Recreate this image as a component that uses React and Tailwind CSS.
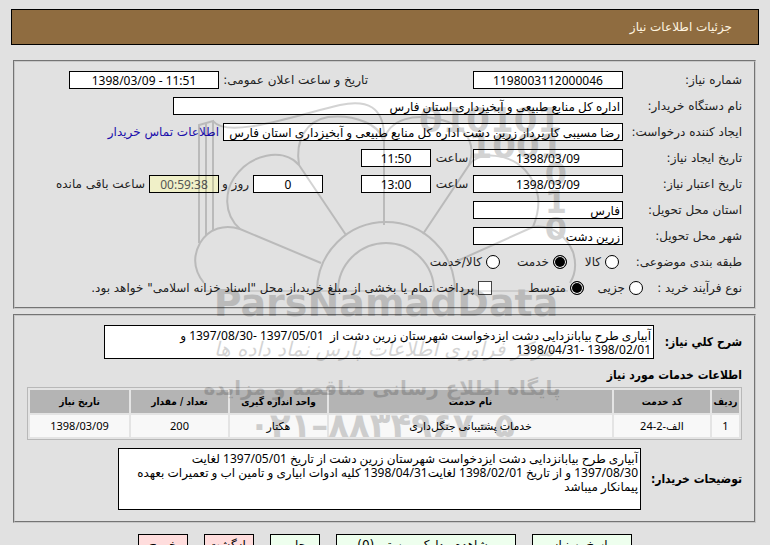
const inputBase =
  "h-[18px] min-w-0 border border-black bg-white px-0.5 font-['Noto_Sans','DejaVu_Sans',sans-serif] text-[12px] leading-4 text-black outline-none";

const Field = ({ id, value, className = "", label }) => (
  <input
    id={id}
    aria-label={label}
    readOnly
    defaultValue={value}
    className={`${inputBase} ${className}`}
  />
);

const Row = ({ label, htmlFor, children }) => (
  <div className="flex h-[18px] items-center">
    <label htmlFor={htmlFor} className="w-[119px] shrink-0 whitespace-nowrap">
      {label}
    </label>
    {children}
  </div>
);

const Radio = ({ name, label, checked, className = "" }) => (
  <label className={`flex items-center gap-1 whitespace-nowrap ${className}`}>
    <input
      type="radio"
      name={name}
      defaultChecked={checked}
      className="size-[14px] appearance-none rounded-full border border-black bg-white checked:bg-black checked:shadow-[inset_0_0_0_1px_white]"
    />
    {label}
  </label>
);

const services = [
  {
    row: "1",
    code: "الف-2-24",
    name: "خدمات پشتیبانی جنگل‌داری",
    unit: "هکتار",
    count: "200",
    date: "1398/03/09",
  },
];

const actions = [
  { label: "پاسخ به نیاز", className: "w-[100px] bg-[#eeffee]" },
  { label: "مشاهده مدارک پیوستی (0)", className: "w-[180px] bg-[#eeffee]" },
  { label: "چاپ", className: "w-[50px] bg-[#eeffee]" },
  { label: "بازگشت", className: "w-[50px] bg-[#ffdddd]" },
  { label: "خروج", className: "w-[50px] bg-[#ffdddd]" },
];

const Watermark = () => (
  <svg
    viewBox="185 80 400 370"
    aria-hidden="true"
    className="pointer-events-none absolute top-[80px] left-1/2 h-[370px] w-[400px] -translate-x-1/2 opacity-[0.17]"
  >
    <g fill="none" stroke="black" strokeWidth="2">
      <path d="M199 243V125L213 121V231M206 235V123" />
      <path d="M213 121C228 140 300 114 340 105C368 99 383 108 384 134V225" />
      <path d="M204 283C192 268 194 254 200 243C209 228 225 224 240 229L321 263" />
      <path d="M240 229C222 213 226 190 234 178C250 154 283 147 299 165L346 235" />
      <path d="M299 165C295 140 306 121 328 117C355 114 380 125 383 140" />
      <path d="M384 140C390 118 415 114 438 119C465 125 477 142 469 165L423 234" />
      <path d="M469 165C480 150 510 154 525 170C540 187 542 205 533 227L455 262" />
      <path d="M533 227C555 224 568 240 573 252C577 265 575 275 570 283" />
      <path d="M317 291A69 69 0 0 1 455 291M338 291A48 48 0 0 1 434 291" />
      <path d="M204 291H568" strokeWidth="1" />
    </g>
    <g
      fill="black"
      fontFamily="'DejaVu Sans', sans-serif"
      fontWeight="bold"
      textAnchor="middle"
    >
      <text x="490" y="132" fontSize="34">010101</text>
      <text x="516" y="158" fontSize="34">1001</text>
      <text x="556" y="185" fontSize="32">0</text>
      <text x="556" y="213" fontSize="32">1</text>
      <text x="556" y="240" fontSize="32">0</text>
      <text x="386" y="316" fontSize="38">ParsNamadData</text>
      <text x="384" y="356" fontSize="20" fontWeight="normal" fontStyle="italic">
        مرکز فرآوری اطلاعات پارس نماد داده ها
      </text>
      <text x="382" y="395" fontSize="20">پایگاه اطلاع رسانی مناقصه و مزایده</text>
      <text x="382" y="437" fontSize="34" direction="ltr">۰۲۱–۸۸۳۴۹۶۷۰۵</text>
    </g>
  </svg>
);

export default function App() {
  return (
    <div
      dir="rtl"
      className="relative min-h-screen overflow-hidden bg-[#e1e1e1] px-[12px] pt-[9px] pb-1 font-['DejaVu_Sans',sans-serif] text-[12px] leading-4 text-[#222]"
    >
      <header className="-mx-px flex h-9 items-center border border-black bg-[#8f6c40] px-[26px] text-[#fff5e0]">
        <h1>جزئیات اطلاعات نیاز</h1>
      </header>

      <main className="ms-0.5 me-px mt-[15px]">
        <section className="flex h-[249px] flex-col gap-2 border-2 border-[#c8c8c8] px-[12px] pt-[9px] [border-style:groove]">
          <Row label="شماره نیاز:" htmlFor="number">
            <Field id="number" value="1198003112000046" className="w-[150px] text-center" />
            <label htmlFor="announce" className="ms-[105px] w-[149px] whitespace-nowrap">
              تاریخ و ساعت اعلان عمومی:
            </label>
            <input
              id="announce"
              dir="ltr"
              readOnly
              defaultValue="1398/03/09 - 11:51"
              className={`${inputBase} w-[150px] text-center`}
            />
          </Row>
          <Row label="نام دستگاه خریدار:" htmlFor="org">
            <Field id="org" value="اداره کل منابع طبیعی و آبخیزداری استان فارس" className="w-[450px]" />
          </Row>
          <Row label="ایجاد کننده درخواست:" htmlFor="creator">
            <Field
              id="creator"
              value="رضا مسیبی کارپرداز زرین دشت اداره کل منابع طبیعی و آبخیزداری استان فارس"
              className="w-[400px]"
            />
            <a href="#contact" className="ms-1 whitespace-nowrap text-[#1a0dab]">
              اطلاعات تماس خریدار
            </a>
          </Row>
          <Row label="تاریخ ایجاد نیاز:" htmlFor="created">
            <Field id="created" value="1398/03/09" className="w-[150px] text-center" />
            <label htmlFor="createdTime" className="w-[42px] text-center">ساعت</label>
            <Field id="createdTime" value="11:50" className="w-[70px] text-center" />
          </Row>
          <Row label="تاریخ اعتبار نیاز:" htmlFor="valid">
            <Field id="valid" value="1398/03/09" className="w-[150px] text-center" />
            <label htmlFor="validTime" className="w-[42px] text-center">ساعت</label>
            <Field id="validTime" value="13:00" className="w-[70px] text-center" />
            <Field id="days" value="0" className="ms-[38px] w-[70px] text-center" />
            <label htmlFor="days" className="w-[34px] ps-1 whitespace-nowrap">روز و</label>
            <Field id="left" value="00:59:38" className="w-[70px] bg-[#f0f0c8]! text-center text-[#555]!" />
            <label htmlFor="left" className="ps-1 whitespace-nowrap">ساعت باقی مانده</label>
          </Row>
          <Row label="استان محل تحویل:" htmlFor="province">
            <Field id="province" value="فارس" className="w-[150px]" />
          </Row>
          <Row label="شهر محل تحویل:" htmlFor="city">
            <Field id="city" value="زرین دشت" className="w-[150px]" />
          </Row>
          <div role="radiogroup" aria-label="طبقه بندی موضوعی" className="flex h-[18px] items-center">
            <span className="w-[123px] shrink-0">طبقه بندی موضوعی:</span>
            <Radio name="kind" label="کالا" className="w-[52px]" />
            <Radio name="kind" label="خدمت" checked className="w-[67px]" />
            <Radio name="kind" label="کالا/خدمت" />
          </div>
          <div className="flex h-[18px] items-center">
            <span className="w-[99px] shrink-0">نوع فرآیند خرید :</span>
            <Radio name="size" label="جزیی" className="w-[59px]" />
            <Radio name="size" label="متوسط" checked className="w-[92px]" />
            <label className="flex items-center gap-1 whitespace-nowrap">
              <input type="checkbox" className="size-[14px] appearance-none border border-[#444] bg-white" />
              پرداخت تمام یا بخشی از مبلغ خرید،از محل "اسناد خزانه اسلامی" خواهد بود.
            </label>
          </div>
        </section>

        <section className="mt-[5px] border-2 border-[#c8c8c8] px-[12px] pt-[9px] pb-[11px] [border-style:groove]">
          <div className="flex items-center">
            <label
              htmlFor="summary"
              className="w-[88px] shrink-0 font-['DejaVu_Sans_Condensed','DejaVu_Sans',sans-serif] font-bold whitespace-nowrap text-black"
            >
              شرح کلي نیاز:
            </label>
            <textarea
              id="summary"
              readOnly
              rows={2}
              className="h-[34px] w-[550px] resize-none overflow-hidden border border-black bg-white px-0.5 pt-[3px] font-['Noto_Sans','DejaVu_Sans',sans-serif] leading-[14px] text-black"
              defaultValue={"آبیاری طرح بیابانزدایی دشت ایزدخواست شهرستان زرین دشت از  1397/05/01 -1397/08/30 و\n1398/02/01 -1398/04/31"}
            />
          </div>
          <h2 className="mt-2 mb-1 font-['DejaVu_Sans_Condensed','DejaVu_Sans',sans-serif] font-bold text-black">
            اطلاعات خدمات مورد نیاز
          </h2>
          <table className="w-full table-fixed border-separate border-spacing-[2px] border border-[#b8b8b8] bg-[#e4e4e4] text-center font-['Noto_Sans','DejaVu_Sans',sans-serif] text-[11px] text-black">
            <thead className="font-['DejaVu_Sans_Condensed','DejaVu_Sans',sans-serif] text-[10px]">
              <tr className="h-[23px] bg-[#b4b4b4]">
                <th className="w-[27px] font-bold">ردیف</th>
                <th className="w-[96px] font-bold">کد خدمت</th>
                <th className="font-bold">نام خدمت</th>
                <th className="w-[97px] font-bold">واحد اندازه گیری</th>
                <th className="w-[97px] font-bold">تعداد / مقدار</th>
                <th className="w-[99px] font-bold">تاریخ نیاز</th>
              </tr>
            </thead>
            <tbody>
              {services.map((s) => (
                <tr key={s.row} className="h-[22px] bg-[#f8f8f8]">
                  <td>{s.row}</td>
                  <td>{s.code}</td>
                  <td>{s.name}</td>
                  <td>{s.unit}</td>
                  <td>{s.count}</td>
                  <td>{s.date}</td>
                </tr>
              ))}
            </tbody>
          </table>
          <div className="mt-2 flex items-center">
            <label
              htmlFor="notes"
              className="w-[101px] shrink-0 font-['DejaVu_Sans_Condensed','DejaVu_Sans',sans-serif] font-bold whitespace-nowrap text-black"
            >
              توضیحات خریدار:
            </label>
            <textarea
              id="notes"
              readOnly
              rows={4}
              className="h-[62px] w-[523px] resize-none overflow-hidden border border-black bg-white px-0.5 pt-[3px] font-['Noto_Sans','DejaVu_Sans',sans-serif] leading-[14px] text-black"
              defaultValue={"آبیاری طرح بیابانزدایی دشت ایزدخواست شهرستان زرین دشت از تاریخ 1397/05/01 لغایت\n1397/08/30 و از تاریخ 1398/02/01 لغایت1398/04/31 کلیه ادوات ابیاری و تامین اب و تعمیرات بعهده\nپیمانکار میباشد"}
            />
          </div>
        </section>
      </main>

      <footer className="mt-[11px] flex justify-center gap-4">
        {actions.map((a) => (
          <button
            key={a.label}
            type="button"
            className={`h-[22px] border border-black whitespace-nowrap text-black ${a.className}`}
          >
            {a.label}
          </button>
        ))}
      </footer>

      <Watermark />
    </div>
  );
}
